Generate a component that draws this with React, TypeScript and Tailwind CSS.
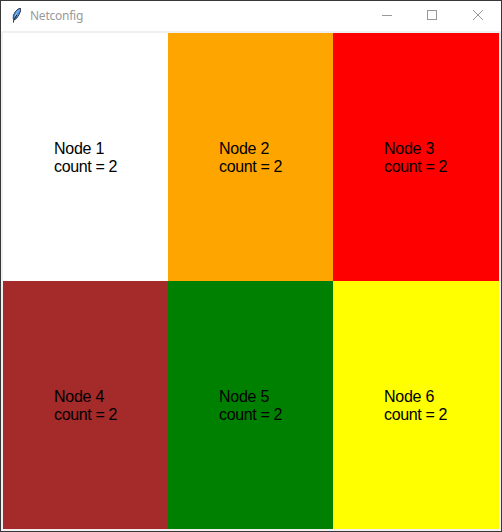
const nodes = [
  { id: 1, color: 'bg-white' },
  { id: 2, color: 'bg-[#ffa500]' },
  { id: 3, color: 'bg-[#ff0000]' },
  { id: 4, color: 'bg-[#a52a2a]' },
  { id: 5, color: 'bg-[#008000]' },
  { id: 6, color: 'bg-[#ffff00]' },
];

function FeatherIcon() {
  return (
    <svg className="h-4 w-4" viewBox="0 0 16 16">
      <path d="M11.4 0.2 L9 1 L6.2 3.8 L4.4 7.2 L4.2 10.6 L5 12 L7.4 10.6 L9.9 7 L11.6 3 Z" fill="#4f92e2" stroke="#10151d" strokeWidth="0.75" />
      <path d="M10.4 1.8 L7.9 4.6 L5.9 8.6" fill="none" stroke="#8fc0f5" strokeWidth="1" />
      <path d="M7.8 7 L5.8 10.3 L4.7 12.2 L4.5 14.6" fill="none" stroke="#10151d" strokeWidth="0.9" />
    </svg>
  );
}

function WindowControls() {
  return (
    <svg className="h-[30px] w-[138px]" viewBox="0 0 138 30" fill="none" stroke="#999999" shapeRendering="crispEdges">
      <path d="M19 14.5 H29" />
      <rect x="64.5" y="9.5" width="9" height="9" />
      <path d="M110 9 L120 19 M120 9 L110 19" shapeRendering="auto" />
    </svg>
  );
}

export default function App() {
  return (
    <div className="flex h-[532px] w-[502px] flex-col border border-[#38383a] bg-white font-['Liberation_Sans',Arial,sans-serif]">
      <header className="flex h-[30px] shrink-0 items-center pl-2">
        <FeatherIcon />
        <span className="ml-[5px] font-['Noto_Sans','Open_Sans',sans-serif] text-[12px] leading-4 tracking-[-0.25px] text-[#999999]">
          Netconfig
        </span>
        <div className="ml-auto">
          <WindowControls />
        </div>
      </header>
      <main className="grid flex-1 grid-cols-[165px_165px_166px] grid-rows-2 bg-[#f0f0f0] p-[2px]">
        {nodes.map((node) => (
          <div key={node.id} className={`flex items-center pl-[51px] ${node.color}`}>
            <p className="pt-0.5 text-[16px] leading-[18px] whitespace-nowrap text-black">
              <span className="block tracking-[-0.25px]">Node {node.id}</span>
              <span className="block tracking-[-0.36px]">count = 2</span>
            </p>
          </div>
        ))}
      </main>
    </div>
  );
}
